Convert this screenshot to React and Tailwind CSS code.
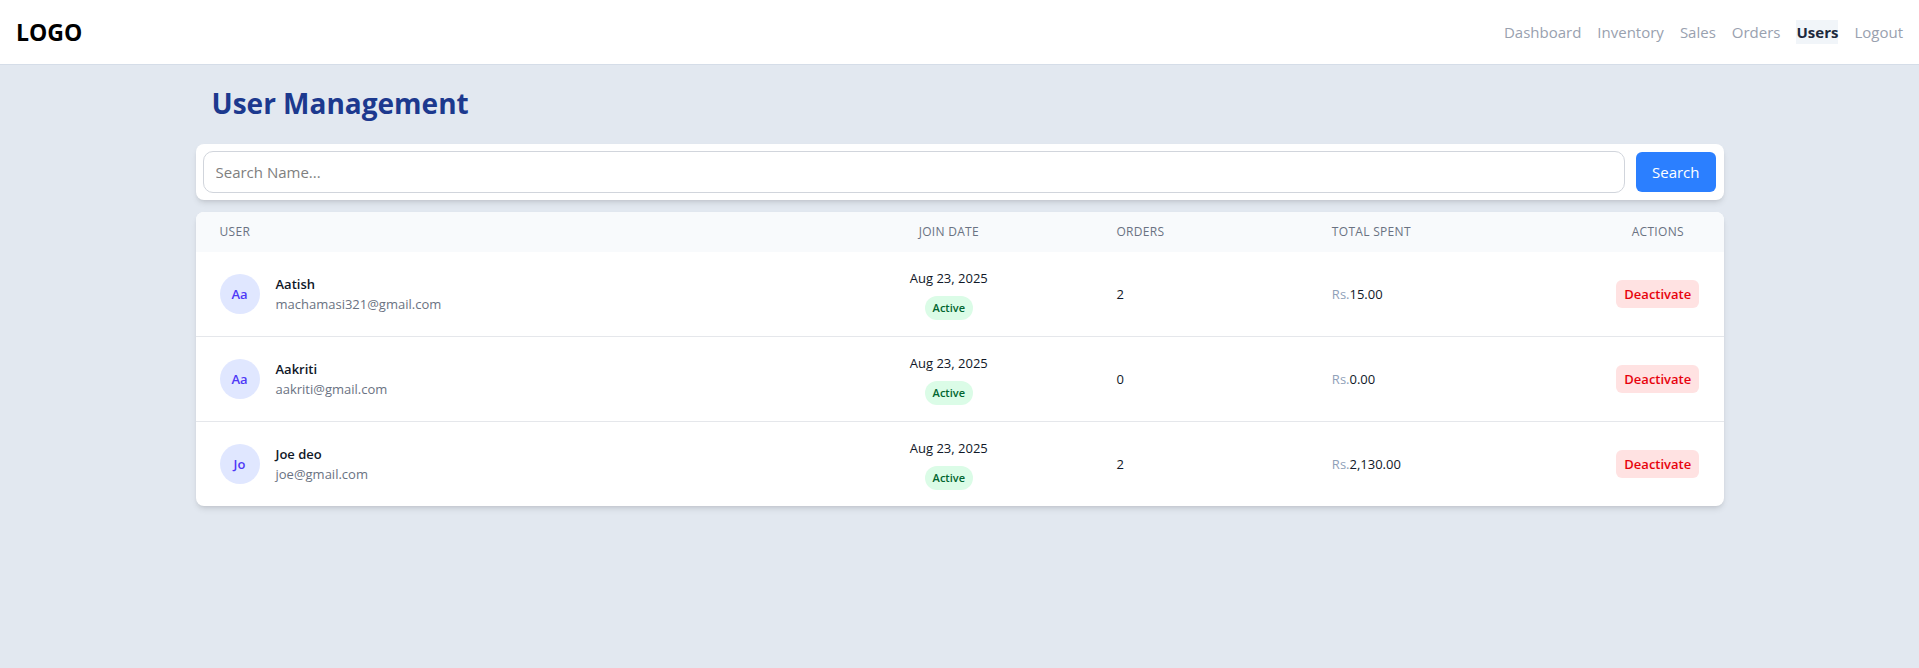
const navItems = ['Dashboard', 'Inventory', 'Sales', 'Orders', 'Users', 'Logout']

const users = [
  { initials: 'Aa', name: 'Aatish', email: 'machamasi321@gmail.com', joined: 'Aug 23, 2025', orders: 2, spent: '15.00' },
  { initials: 'Aa', name: 'Aakriti', email: 'aakriti@gmail.com', joined: 'Aug 23, 2025', orders: 0, spent: '0.00' },
  { initials: 'Jo', name: 'Joe deo', email: 'joe@gmail.com', joined: 'Aug 23, 2025', orders: 2, spent: '2,130.00' },
]

function Header() {
  return (
    <header className="flex min-h-[65px] items-center justify-between border-b border-[#d5dde8] bg-white px-4">
      <a href="#" className="text-[23px] leading-8 font-bold text-black">LOGO</a>
      <nav className="flex flex-wrap gap-4">
        {navItems.map((item) => (
          <a
            key={item}
            href="#"
            className={item === 'Users' ? 'bg-slate-100 font-bold text-slate-800' : 'text-gray-400'}
          >
            {item}
          </a>
        ))}
      </nav>
    </header>
  )
}

function UserRow({ user }) {
  return (
    <tr>
      <td className="px-6 py-4">
        <div className="flex items-center gap-4">
          <div className="flex size-10 shrink-0 items-center justify-center rounded-full bg-indigo-100 font-semibold text-indigo-600">
            {user.initials}
          </div>
          <div>
            <div className="font-semibold">{user.name}</div>
            <div className="text-gray-500">{user.email}</div>
          </div>
        </div>
      </td>
      <td className="px-6 py-4">
        <div className="flex flex-col items-center gap-2">
          <span>{user.joined}</span>
          <span className="rounded-full bg-green-100 px-2 py-1 text-[11px] leading-4 font-semibold text-green-800">Active</span>
        </div>
      </td>
      <td className="px-6 py-4">{user.orders}</td>
      <td className="px-6 py-4">
        <span className="text-slate-400">Rs.</span>
        {user.spent}
      </td>
      <td className="px-6 py-4 text-center">
        <button type="button" className="rounded-md bg-red-100 px-2 py-1 font-semibold text-red-600">Deactivate</button>
      </td>
    </tr>
  )
}

export default function App() {
  return (
    <div className="min-h-screen bg-slate-200 font-['Open_Sans','Noto_Sans',sans-serif] text-[15px] leading-6 text-gray-900">
      <Header />
      <main className="mx-auto max-w-384 px-1">
        <h1 className="px-4 pt-[18px] pb-[21px] text-[28px] leading-10 font-bold text-blue-900">User Management</h1>
        <form className="flex items-center gap-[11px] rounded-lg bg-white py-[7px] pr-2 pl-[7px] shadow-md" onSubmit={(e) => e.preventDefault()}>
          <input
            type="text"
            aria-label="Search Name"
            placeholder="Search Name..."
            className="min-w-0 flex-1 rounded-[10px] border border-gray-300 px-3 py-2 placeholder:text-[#808080]"
          />
          <button type="submit" className="rounded-md bg-blue-500 px-4 py-2 text-white">Search</button>
        </form>
        <div className="mt-3 overflow-hidden rounded-lg bg-white shadow-md">
          <table className="w-full table-fixed text-[13px] leading-5">
            <thead className="bg-slate-50 text-left text-xs tracking-wide text-gray-500 uppercase">
              <tr>
                <th scope="col" className="w-[39.9%] px-6 py-3 font-medium">User</th>
                <th scope="col" className="w-[18.8%] px-6 py-3 text-center font-medium">Join Date</th>
                <th scope="col" className="w-[14.1%] px-6 py-3 font-medium">Orders</th>
                <th scope="col" className="w-[18.6%] px-6 py-3 font-medium">Total Spent</th>
                <th scope="col" className="px-6 py-3 text-center font-medium">Actions</th>
              </tr>
            </thead>
            <tbody className="divide-y divide-gray-200">
              {users.map((user) => (
                <UserRow key={user.email} user={user} />
              ))}
            </tbody>
          </table>
        </div>
      </main>
    </div>
  )
}
